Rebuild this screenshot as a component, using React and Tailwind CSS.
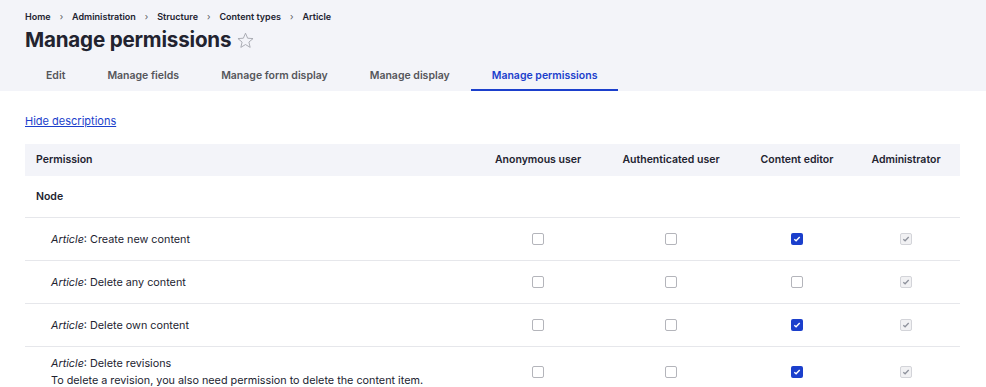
const crumbs = ["Home", "Administration", "Structure", "Content types", "Article"];
const tabs = ["Edit", "Manage fields", "Manage form display", "Manage display", "Manage permissions"];

const roles = ["Anonymous user", "Authenticated user", "Content editor", "Administrator"];

const rows = [
  { label: "Create new content", checks: [false, false, true] },
  { label: "Delete any content", checks: [false, false, false] },
  { label: "Delete own content", checks: [false, false, true] },
  {
    label: "Delete revisions",
    desc: "To delete a revision, you also need permission to delete the content item.",
    checks: [false, false, true],
  },
];

const grid = "grid grid-cols-[451px_124px_142px_110px_108px]";

function Check({ on, locked }) {
  if (locked) {
    return (
      <span className="w-[12px] h-[12px] rounded-[2px] border border-[#d3d4d9] bg-[#f1f1f3] flex items-center justify-center">
        <svg width="8" height="8" viewBox="0 0 8 8">
          <path d="M1.3 4.2 L3.1 5.8 L6.7 2" fill="none" stroke="#8e929c" strokeWidth="1.3" />
        </svg>
      </span>
    );
  }
  if (on) {
    return (
      <span className="w-[12px] h-[12px] rounded-[2px] bg-[#1b3fcc] flex items-center justify-center">
        <svg width="8" height="8" viewBox="0 0 8 8">
          <path d="M1.3 4.2 L3.1 5.8 L6.7 2" fill="none" stroke="#ffffff" strokeWidth="1.4" />
        </svg>
      </span>
    );
  }
  return <span className="w-[12px] h-[12px] rounded-[2px] border border-[#b4b5bb] bg-white" />;
}

export default function App() {
  return (
    <div className="w-[986px] h-[387px] overflow-hidden bg-white text-[#222330] font-['Inter','Liberation_Sans',sans-serif]">
      {/* header */}
      <div className="bg-[#f3f4f9] px-[25px] pt-[11px]">
        <div className="flex items-center gap-[9px] text-[9px] font-semibold leading-[12px]">
          {crumbs.map((c, i) => (
            <span key={c} className="flex items-center gap-[9px]">
              {i > 0 && <span className="text-[#55565b] font-normal">›</span>}
              <span>{c}</span>
            </span>
          ))}
        </div>
        <div className="flex items-center gap-[5px] mt-[4px] h-[25px]">
          <h1 className="text-[20.6px] font-bold leading-[25px] tracking-[-0.2px]">Manage permissions</h1>
          <svg width="19" height="19" viewBox="0 0 24 24" className="mt-[2px]">
            <path
              d="M12 2.8 L14.7 9.1 L21.5 9.6 L16.3 14 L17.9 20.7 L12 17.1 L6.1 20.7 L7.7 14 L2.5 9.6 L9.3 9.1 Z"
              fill="none"
              stroke="#a0a3ab"
              strokeWidth="1.1"
              strokeLinejoin="round"
            />
          </svg>
        </div>
        <div className="flex mt-[15px] text-[10.5px] font-semibold">
          {tabs.map((t, i) => {
            const active = i === tabs.length - 1;
            return (
              <div
                key={t}
                className={`h-[24px] pt-[1px] px-[21px] flex items-start border-b-[2px] ${
                  active ? "border-[#1b3fcc] text-[#1b3fcc]" : "border-transparent text-[#55565b]"
                }`}
              >
                {t}
              </div>
            );
          })}
        </div>
      </div>

      {/* body */}
      <div className="px-[25px]">
        <a className="block mt-[23px] text-[11px] leading-[14px] text-[#1b3fcc] underline">Hide descriptions</a>

        <div className="mt-[16px] w-[935px]">
          <div className={`${grid} h-[32px] items-center bg-[#f3f4f9] text-[10.5px] font-semibold`}>
            <div className="pl-[11px]">Permission</div>
            {roles.map((r) => (
              <div key={r} className="text-center">{r}</div>
            ))}
          </div>

          <div className="h-[42px] flex items-center pl-[11px] text-[10.5px] font-semibold border-b border-[#e6e7eb]">
            Node
          </div>

          {rows.map((row) => (
            <div key={row.label} className={`${grid} min-h-[43px] items-center border-b border-[#e6e7eb] text-[10.8px]`}>
              <div className="pl-[26px] py-[8px] leading-[17px]">
                <div>
                  <em>Article</em>: {row.label}
                </div>
                {row.desc && <div>{row.desc}</div>}
              </div>
              {row.checks.map((c, i) => (
                <div key={i} className="flex justify-center">
                  <Check on={c} />
                </div>
              ))}
              <div className="flex justify-center">
                <Check locked />
              </div>
            </div>
          ))}
        </div>
      </div>
    </div>
  );
}
